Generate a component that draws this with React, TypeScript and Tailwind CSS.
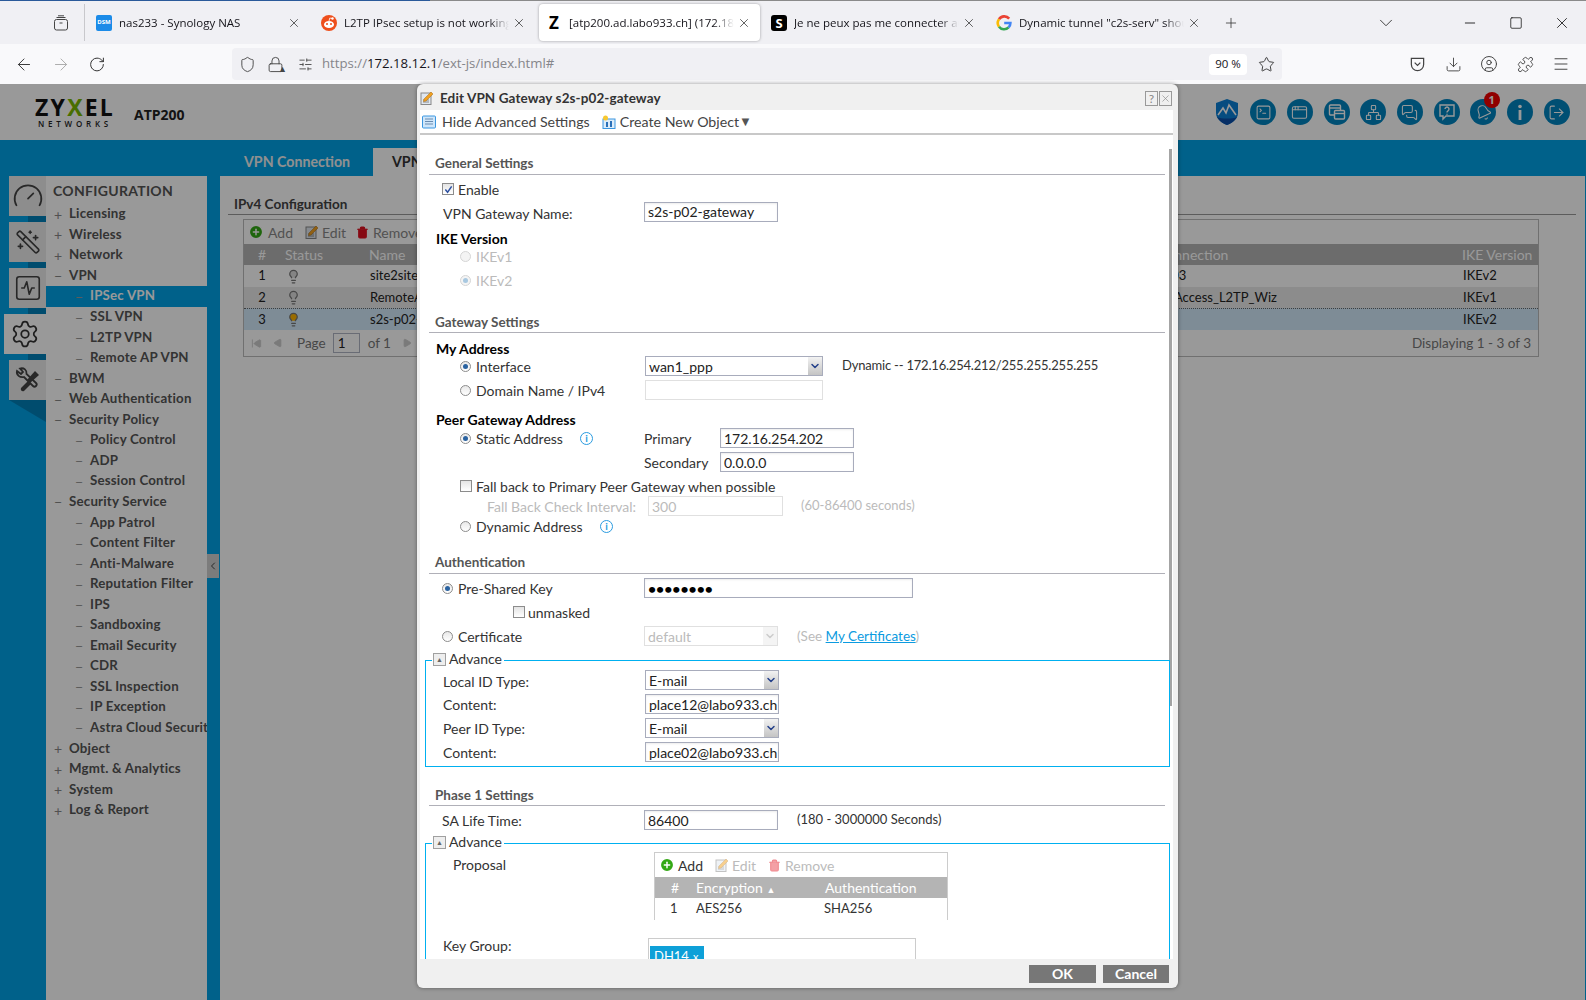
import React from "react";
import {
  AppWindow,
  ArrowLeft,
  ArrowRight,
  Bell,
  ChevronDown,
  ChevronLeft,
  CirclePlus,
  Download,
  Gauge,
  Lightbulb,
  LogOut,
  Menu,
  MessagesSquare,
  Minus,
  Network,
  Plus,
  Puzzle,
  RotateCw,
  Settings,
  Shield,
  SlidersHorizontal,
  SquareActivity,
  SquareTerminal,
  Square,
  Star,
  Trash2,
  UserCircle,
  WandSparkles,
  X,
  Lock,
  SkipBack,
  Play,
} from "lucide-react";

const tabs = [
  { title: "nas233 - Synology NAS", icon: "dsm" },
  { title: "L2TP IPsec setup is not working", icon: "reddit" },
  { title: "[atp200.ad.labo933.ch] (172.18.12.1)", icon: "z", active: true },
  { title: "Je ne peux pas me connecter au VPN", icon: "s" },
  { title: 'Dynamic tunnel "c2s-serv" should', icon: "g" },
];

const menu = [
  { label: "Licensing", sign: "+", level: 1 },
  { label: "Wireless", sign: "+", level: 1 },
  { label: "Network", sign: "+", level: 1 },
  { label: "VPN", sign: "−", level: 1 },
  { label: "IPSec VPN", sign: "−", level: 2, active: true },
  { label: "SSL VPN", sign: "−", level: 2 },
  { label: "L2TP VPN", sign: "−", level: 2 },
  { label: "Remote AP VPN", sign: "−", level: 2 },
  { label: "BWM", sign: "−", level: 1 },
  { label: "Web Authentication", sign: "−", level: 1 },
  { label: "Security Policy", sign: "−", level: 1 },
  { label: "Policy Control", sign: "−", level: 2 },
  { label: "ADP", sign: "−", level: 2 },
  { label: "Session Control", sign: "−", level: 2 },
  { label: "Security Service", sign: "−", level: 1 },
  { label: "App Patrol", sign: "−", level: 2 },
  { label: "Content Filter", sign: "−", level: 2 },
  { label: "Anti-Malware", sign: "−", level: 2 },
  { label: "Reputation Filter", sign: "−", level: 2 },
  { label: "IPS", sign: "−", level: 2 },
  { label: "Sandboxing", sign: "−", level: 2 },
  { label: "Email Security", sign: "−", level: 2 },
  { label: "CDR", sign: "−", level: 2 },
  { label: "SSL Inspection", sign: "−", level: 2 },
  { label: "IP Exception", sign: "−", level: 2 },
  { label: "Astra Cloud Security", sign: "−", level: 2 },
  { label: "Object", sign: "+", level: 1 },
  { label: "Mgmt. & Analytics", sign: "+", level: 1 },
  { label: "System", sign: "+", level: 1 },
  { label: "Log & Report", sign: "+", level: 1 },
];

const Windows = () => (
  <svg viewBox="0 0 18 18" className="w-[18px] h-[18px] text-white" fill="none" stroke="currentColor" strokeWidth="1.4">
    <rect x="1.5" y="2" width="11" height="10" rx="1" />
    <path d="M1.5 5h11" />
    <rect x="6.5" y="7.5" width="10" height="8.5" rx="1" fill="#0084c0" />
    <path d="M6.5 10.5h10" />
  </svg>
);

const HelpBubble = () => (
  <svg viewBox="0 0 18 18" className="w-[18px] h-[18px] text-white" fill="none" stroke="currentColor" strokeWidth="1.4">
    <path d="M2 2h14v11H8l-3 3v-3H2z" />
    <path d="M7 6 a2 2 0 1 1 3 1.8 C9.2 8.3 9 8.8 9 9.6" />
    <path d="M9 10.8v1" />
  </svg>
);

const InfoBar = () => (
  <svg viewBox="0 0 18 18" className="w-[18px] h-[18px] text-white" fill="currentColor">
    <circle cx="9" cy="3.5" r="1.8" />
    <rect x="7.6" y="7" width="2.8" height="10" />
  </svg>
);

const headerIcons = [
  <SquareTerminal key="a" size={17} strokeWidth={1.5} className="text-white" />,
  <AppWindow key="b" size={17} strokeWidth={1.5} className="text-white" />,
  <Windows key="c" />,
  <Network key="d" size={17} strokeWidth={1.5} className="text-white" />,
  <MessagesSquare key="e" size={17} strokeWidth={1.5} className="text-white" />,
  <HelpBubble key="f" />,
  <Bell key="g" size={17} strokeWidth={1.5} className="text-white -rotate-[25deg]" />,
  <InfoBar key="h" />,
  <LogOut key="i" size={17} strokeWidth={1.5} className="text-white" />,
];

const Favicon = ({ kind }: { kind: string }) => {
  if (kind === "dsm")
    return (
      <div className="w-4 h-4 rounded-[2px] bg-[#1b8be8] text-white text-[6px] font-bold flex items-center justify-center">
        DSM
      </div>
    );
  if (kind === "reddit")
    return (
      <svg viewBox="0 0 16 16" className="w-4 h-4">
        <circle cx="8" cy="8" r="8" fill="#ee4f1c" />
        <ellipse cx="8" cy="9.5" rx="5" ry="3.6" fill="white" />
        <circle cx="6" cy="9" r="1" fill="#ee4f1c" />
        <circle cx="10" cy="9" r="1" fill="#ee4f1c" />
        <circle cx="11.5" cy="3.5" r="1.2" fill="white" />
        <path d="M8 6 L8.8 3 L11 3.5" stroke="white" strokeWidth="0.8" fill="none" />
      </svg>
    );
  if (kind === "z")
    return <div className="w-4 h-4 text-[17px] leading-4 font-bold text-center text-black">Z</div>;
  if (kind === "s")
    return (
      <div className="w-4 h-4 rounded-[3px] bg-black text-white text-[13px] leading-4 font-bold text-center">
        S
      </div>
    );
  return (
    <svg viewBox="0 0 16 16" className="w-4 h-4" fill="none" strokeWidth="2.6">
      <path d="M13.2 3.6 A6.4 6.4 0 0 0 3 4.3" stroke="#ea4335" />
      <path d="M3 4.3 A6.4 6.4 0 0 0 3 11.7" stroke="#fbbc05" />
      <path d="M3 11.7 A6.4 6.4 0 0 0 12.6 12.4" stroke="#34a853" />
      <path d="M12.6 12.4 A6.4 6.4 0 0 0 14.4 8 H8.2" stroke="#4285f4" />
    </svg>
  );
};

const TabBar = () => (
  <div className="h-11 bg-[#f0f0f4] flex flex-col">
    <div className="h-px bg-[linear-gradient(to_right,#2a5a9a_430px,#8a8a8a_430px)]" />
    <div className="flex-1 flex items-center">
      <svg viewBox="0 0 16 16" className="ml-[53px] w-4 h-4 text-[#444]" fill="none" stroke="currentColor">
        <rect x="1.5" y="4.5" width="13" height="10.5" rx="2" />
        <path d="M3.5 2.5h9M5 0.8h6M6.5 8h3" />
      </svg>
      <div className="ml-[15px] mr-1 w-px h-[37px] bg-[#c8c8cc]" />
      {tabs.map((tab) => (
        <div
          key={tab.icon}
          className={
            tab.active
              ? "w-[221px] mr-1 h-[37px] flex items-center pl-[7px] bg-white rounded shadow-[0_0_3px_rgba(0,0,0,0.35)]"
              : "w-[221px] mr-1 h-[37px] flex items-center pl-[7px]"
          }
        >
          <div className="shrink-0">
            <Favicon kind={tab.icon} />
          </div>
          <div className="ml-[7px] w-[165px] overflow-hidden whitespace-nowrap text-[11.5px] text-[#15141a] [mask-image:linear-gradient(to_right,black_88%,transparent)]">
            {tab.title}
          </div>
          <X size={14} strokeWidth={1.2} className="ml-[3px] text-[#222]" />
        </div>
      ))}
      <div className="w-[34px] flex justify-center">
        <Plus size={16} strokeWidth={1.2} className="text-[#333]" />
      </div>
      <div className="ml-auto flex items-center pr-3">
        <ChevronDown size={22} strokeWidth={1} className="w-6 text-[#333]" />
        <Minus size={16} strokeWidth={1.3} className="ml-[60px] w-6 text-[#111]" />
        <Square size={14} strokeWidth={1.3} className="ml-[22px] w-6 text-[#111]" />
        <X size={18} strokeWidth={1.1} className="ml-[22px] w-6 text-[#111]" />
      </div>
    </div>
  </div>
);

const ToolBar = () => (
  <div className="h-10 bg-[#f9f9fb] flex items-center pl-3 pr-[7px]">
    <ArrowLeft size={19} strokeWidth={1.2} className="w-6 text-[#333]" />
    <ArrowRight size={19} strokeWidth={1.2} className="ml-[13px] w-6 text-[#aaa]" />
    <RotateCw size={17} strokeWidth={1.4} className="ml-3 w-6 text-[#333]" />
    <div className="ml-[123px] w-[1050px] h-8 bg-[#f0f0f4] rounded flex items-center pl-[7px]">
      <Shield size={17} strokeWidth={1.3} className="text-[#444]" />
      <div className="relative ml-[11px]">
        <Lock size={17} strokeWidth={1.3} className="text-[#444]" />
        <div className="absolute right-[-3px] bottom-0 text-[9px] leading-[9px] font-bold text-[#444]">▲</div>
      </div>
      <SlidersHorizontal size={15} strokeWidth={1.4} className="ml-[14px] text-[#444]" />
      <div className="ml-[9px] text-[13.2px] text-[#85858a] whitespace-nowrap">
        https://<span className="text-[#15141a]">172.18.12.1</span>/ext-js/index.html#
      </div>
      <div className="ml-auto w-[38px] h-[21px] bg-white rounded text-[11.5px] flex items-center justify-center text-[#15141a]">
        90 %
      </div>
      <Star size={17} strokeWidth={1.3} className="ml-[11px] mr-[7px] text-[#333]" />
    </div>
    <div className="ml-auto flex items-center">
      <div className="w-9 flex justify-center">
        <svg viewBox="0 0 18 18" className="w-[17px] h-[17px] text-[#444]" fill="none" stroke="currentColor" strokeWidth="1.3">
          <path d="M2.5 2.5h13v6.5a6.5 6.5 0 0 1-13 0z" />
          <path d="M6 7l3 3 3-3" />
        </svg>
      </div>
      <div className="w-9 flex justify-center">
        <Download size={17} strokeWidth={1.3} className="text-[#444]" />
      </div>
      <div className="w-9 flex justify-center">
        <UserCircle size={18} strokeWidth={1.3} className="text-[#444]" />
      </div>
      <div className="w-9 flex justify-center">
        <Puzzle size={17} strokeWidth={1.3} className="text-[#444]" />
      </div>
      <div className="w-9 flex justify-center">
        <Menu size={18} strokeWidth={1.3} className="text-[#444]" />
      </div>
    </div>
  </div>
);

const AppHeader = () => (
  <div className="h-14 bg-white flex items-center shrink-0">
    <div className="ml-9 w-[78px] flex flex-col items-center">
      <div className="text-[23px] leading-[23px] font-bold text-[#111] tracking-[2.2px]">
        ZY<span className="text-[#7ab800]">X</span>EL
      </div>
      <div className="text-[8px] leading-[10px] font-semibold text-[#222] tracking-[3.8px]">NETWORKS</div>
    </div>
    <div className="ml-5 text-[14px] font-bold text-[#222] mt-[4px]">ATP200</div>
    <div className="ml-auto flex items-center pr-[11px]">
      <svg viewBox="0 0 24 28" className="w-6 h-7 mr-[6px]">
        <path d="M12 1 L23 5 V15 C23 21 17 25 12 27 C7 25 1 21 1 15 V5 Z" fill="#0b7fd6" />
        <path d="M2 19 C6 21 18 21 22 19 C19 24 15 26 12 27 C9 26 5 24 2 19 Z" fill="#0a4ea8" />
        <path d="M3 17 L8 10 L11 15 L14 7 L21 17" fill="none" stroke="white" strokeWidth="1.6" />
      </svg>
      {headerIcons.map((icon, i) => (
        <div key={i} className="relative w-[36.7px] flex justify-center">
          <div className="w-[26px] h-[26px] rounded-full bg-[#0084c0] flex items-center justify-center">{icon}</div>
          {i === 6 && (
            <div className="absolute -top-[7px] right-[2px] w-4 h-4 rounded-full bg-[#f00000] text-white text-[11px] font-bold flex items-center justify-center">
              1
            </div>
          )}
        </div>
      ))}
    </div>
  </div>
);

const SideTiles = () => (
  <div className="w-[46px] shrink-0 flex flex-col items-end">
    <div className="w-[37px] h-10 bg-[#ececec] flex items-center justify-center">
      <Gauge size={32} strokeWidth={1.3} className="text-[#444]" />
    </div>
    <div className="w-[18px] h-1.5 bg-[#007fb8]" />
    <div className="w-[37px] h-10 bg-[#ececec] flex items-center justify-center">
      <WandSparkles size={26} strokeWidth={1.5} className="text-[#444] -scale-x-100" />
    </div>
    <div className="w-[18px] h-1.5 bg-[#007fb8]" />
    <div className="w-[37px] h-10 bg-[#ececec] flex items-center justify-center">
      <SquareActivity size={30} strokeWidth={1.3} className="text-[#444]" />
    </div>
    <div className="w-[18px] h-1.5 bg-[#007fb8]" />
    <div className="w-[42px] h-10 bg-white flex items-center justify-center">
      <Settings size={30} strokeWidth={1.4} className="text-[#333]" />
    </div>
    <div className="w-[18px] h-1.5 bg-[#007fb8]" />
    <div className="w-[37px] h-10 bg-[#ececec] flex items-center justify-center">
      <svg viewBox="0 0 28 28" className="w-7 h-7 text-[#444]" fill="none" stroke="currentColor" strokeWidth="1.8">
        <path d="M3 5 L7 8 L9 6 L6 2.5 C10 1.5 13 4 12.5 8 L22 17 C24 19 21 22 19 20 L10 11 C6 12 2 9 3 5 Z" />
        <path d="M21 5 L25 9 L16 17 L13 14 Z" fill="currentColor" stroke="none" />
        <path d="M14 15 L7 22 C6 24 8 26 10 25 L17 18 Z" fill="currentColor" stroke="none" />
      </svg>
    </div>
    <div className="w-[37px] h-[22px] bg-[#007fb8] [clip-path:polygon(0_0,100%_0,100%_100%)]" />
  </div>
);

const SideMenu = () => (
  <div className="w-[161px] shrink-0 bg-white overflow-hidden font-['Lato',sans-serif]">
    <div className="h-7 pl-[7px] flex items-center text-[14px] font-bold text-[#555] tracking-[0.3px]">
      CONFIGURATION
    </div>
    {menu.map((item) => (
      <div
        key={item.label}
        className={
          item.active
            ? "h-[20.55px] flex items-center bg-[#00a2e6] text-white whitespace-nowrap"
            : "h-[20.55px] flex items-center whitespace-nowrap text-[#555]"
        }
      >
        <div
          className={
            item.level === 1
              ? "shrink-0 w-[23px] pl-[8px] text-[14px] font-normal text-[#888]"
              : "shrink-0 w-[44px] pl-[29px] text-[14px] font-normal text-[#999]"
          }
        >
          {item.sign}
        </div>
        <div className="text-[13.3px] font-bold tracking-[0.2px]">{item.label}</div>
      </div>
    ))}
  </div>
);

const gridCols = "grid grid-cols-[36px_83px_750px_348px_1fr] items-center";

const GatewayGrid = () => (
  <div className="ml-[15px] mt-[4px] w-[1296px] h-[138px] border border-[#bbb] text-[13px] text-[#222] font-['Lato',sans-serif]">
    <div className="h-6 flex items-center text-[#888] text-[14px]">
      <CirclePlus size={16} strokeWidth={2.2} className="ml-[4px] text-white fill-[#33a814]" />
      <span className="ml-[4px]">Add</span>
      <DocEdit className="ml-[12px]" />
      <span className="ml-[3px]">Edit</span>
      <Trash2 size={13} className="ml-[10px] text-[#e01020] fill-[#e01020]" />
      <span className="ml-[4px]">Remove</span>
    </div>
    <div className={gridCols + " h-[21px] bg-[#b4b4b4] text-white text-[14px]"}>
      <div className="text-center">#</div>
      <div className="pl-[5px]">Status</div>
      <div className="pl-[6px]">Name</div>
      <div className="pl-[12px]">VPN Connection</div>
      <div className="pl-[1px]">IKE Version</div>
    </div>
    <div className={gridCols + " h-[22px]"}>
      <div className="text-center">1</div>
      <Lightbulb size={15} className="ml-[6px] text-[#777] fill-[#ddd]" />
      <div className="pl-[7px]">site2site-p03</div>
      <div className="-ml-[2px]">site2site-p03</div>
      <div className="pl-[2px]">IKEv2</div>
    </div>
    <div className={gridCols + " h-[21px] bg-[#eaeaea]"}>
      <div className="text-center">2</div>
      <Lightbulb size={15} className="ml-[6px] text-[#777] fill-[#ddd]" />
      <div className="pl-[7px]">RemoteAccess</div>
      <div className="pl-[11px]">Remote_Access_L2TP_Wiz</div>
      <div className="pl-[2px]">IKEv1</div>
    </div>
    <div className={gridCols + " h-[22px] bg-[#d2e9fa] border-t border-dotted border-[#666]"}>
      <div className="text-center">3</div>
      <Lightbulb size={15} className="ml-[6px] text-[#777] fill-[#ffb400]" />
      <div className="pl-[7px]">s2s-p02-gateway</div>
      <div />
      <div className="pl-[2px]">IKEv2</div>
    </div>
    <div className="h-[26px] flex items-center text-[13.5px] text-[#777]">
      <SkipBack size={11} className="ml-[7px] text-[#ccc] fill-[#ccc]" />
      <Play size={10} className="ml-[11px] rotate-180 text-[#ccc] fill-[#ccc]" />
      <span className="ml-[14px]">Page</span>
      <div className="ml-[7px] w-[27px] h-[20px] border border-[#b0b4c4] bg-white text-[#222] pl-1 leading-[18px]">1</div>
      <span className="ml-[8px]">of 1</span>
      <Play size={10} className="ml-[11px] text-[#ccc] fill-[#ccc]" />
      <span className="ml-auto mr-[7px]">Displaying 1 - 3 of 3</span>
    </div>
  </div>
);

const DocEdit = ({ faded, className }: { faded?: boolean; className?: string }) => (
  <svg viewBox="0 0 14 14" className={(faded ? "w-[14px] h-[14px] opacity-50 " : "w-[14px] h-[14px] ") + (className ?? "")}>
    <rect x="1" y="2" width="10" height="11.5" fill="#dfe6ee" stroke="#888" />
    <path d="M3 9h6M3 11h6" stroke="#888" />
    <path d="M4 8 L11 1 L13 3 L6 10 L3.5 10.5 Z" fill="#f0a020" stroke="#a86a10" strokeWidth="0.5" />
  </svg>
);

const Page = () => (
  <div className="relative flex-1 flex flex-col overflow-hidden">
    <AppHeader />
    <div className="flex-1 bg-[#00a2e6] flex flex-col">
      <div className="h-9 flex items-end">
        <div className="ml-[244px] w-[129px] h-7 flex items-center text-[14.2px] font-bold text-[#f0f0f0] font-['Lato',sans-serif]">
          VPN Connection
        </div>
        <div className="w-[120px] h-7 pl-[19px] bg-white flex items-center text-[14.2px] font-bold text-[#333] font-['Lato',sans-serif]">
          VPN Gateway
        </div>
      </div>
      <div className="relative flex-1 flex">
        <SideTiles />
        <SideMenu />
        <div className="absolute left-[207px] top-[378px] w-3 h-6 bg-[#cfcfcf] flex items-center justify-center">
          <ChevronLeft size={14} className="text-[#444]" />
        </div>
        <div className="ml-[13px] mr-px flex-1 bg-white pl-2 pr-[9px]">
          <div className="mt-[17px] h-[22px] pt-[2px] border-b border-[#999] pl-[6px] flex items-center text-[13.5px] font-bold text-[#444] font-['Lato',sans-serif]">
            IPv4 Configuration
          </div>
          <GatewayGrid />
        </div>
      </div>
    </div>
    <div className="absolute inset-0 bg-black/40" />
  </div>
);

const SectionTitle = ({ title, className }: { title: string; className: string }) => (
  <div className={"ml-[9px] mr-2 h-[23px] pl-[6px] border-b border-[#b0b0b8] flex items-center text-[13.5px] font-bold text-[#555] " + className}>
    {title}
  </div>
);

const Radio = ({ on, disabled }: { on?: boolean; disabled?: boolean }) => (
  <div
    className={
      disabled
        ? "shrink-0 w-[11px] h-[11px] rounded-full border border-[#d5d5d5] bg-[#f4f4f4] flex items-center justify-center"
        : "shrink-0 w-[11px] h-[11px] rounded-full border border-[#8c8c8c] bg-gradient-to-b from-[#e8e8e8] to-white flex items-center justify-center"
    }
  >
    {on && <div className={disabled ? "w-[5px] h-[5px] rounded-full bg-[#a8c8e0]" : "w-[5px] h-[5px] rounded-full bg-[#2a62a0]"} />}
  </div>
);

const Check = ({ on }: { on?: boolean }) => (
  <div className="shrink-0 w-3 h-3 border border-[#8c8c8c] bg-gradient-to-b from-[#e4e4e4] to-white flex items-center justify-center">
    {on && (
      <svg viewBox="0 0 10 10" className="w-[9px] h-[9px]">
        <path d="M1.5 5 L4 8 L8.5 1.5" fill="none" stroke="#2b4fa0" strokeWidth="1.6" />
      </svg>
    )}
  </div>
);

const Field = ({ value, className, disabled }: { value?: string; className: string; disabled?: boolean }) => (
  <div
    className={
      (disabled
        ? "border border-[#e0e0e0] text-[#bbb] "
        : "border border-[#a8acbc] text-[#222] shadow-[inset_0_1px_2px_rgba(0,0,0,0.08)] ") +
      "h-5 pl-[3px] flex items-center bg-white whitespace-nowrap overflow-hidden " +
      className
    }
  >
    {value}
  </div>
);

const SelectBox = ({ value, className, disabled }: { value: string; className: string; disabled?: boolean }) => (
  <div
    className={
      (disabled ? "border border-[#e0e0e0] text-[#bbb] " : "border border-[#a8acbc] text-[#222] ") +
      "h-5 pl-[3px] flex items-center bg-white " +
      className
    }
  >
    <span className="flex-1">{value}</span>
    <div
      className={
        disabled
          ? "w-[14px] h-full bg-[#f4f4f4] flex items-center justify-center"
          : "w-[14px] h-full bg-gradient-to-b from-[#f2f2f2] to-[#c4c4c4] flex items-center justify-center"
      }
    >
      <ChevronDown size={12} strokeWidth={3} className={disabled ? "text-[#ccc]" : "text-[#24408a]"} />
    </div>
  </div>
);

const InfoDot = ({ className }: { className: string }) => (
  <div className={"w-[13px] h-[13px] rounded-full border border-[#2a9be0] text-[#2a9be0] text-[10px] leading-[11px] font-bold text-center " + className}>
    i
  </div>
);

const Legend = () => (
  <div className="absolute -top-[9px] left-[6px] pr-[2px] pl-px bg-white flex items-center h-[14px]">
    <div className="w-[13px] h-[13px] border border-[#a0a0a0] bg-[#eee] flex items-center justify-center text-[7px] leading-none text-[#666]">
      ▲
    </div>
    <span className="ml-[3px] -mt-[2px] text-[14px] text-[#333]">Advance</span>
  </div>
);

const GatewayForm = () => (
  <div className="relative flex-1 bg-white overflow-hidden text-[14px] text-[#333]">
    <div className="absolute left-[749px] top-[14px] w-[3px] h-[557px] bg-[#a4a4a4]" />

    <SectionTitle title="General Settings" className="mt-[17px] pt-[1px]" />
    <div className="mt-[2px] h-6 pl-[22px] flex items-center">
      <Check on />
      <span className="ml-[4px]">Enable</span>
    </div>
    <div className="mt-px h-[19px] pl-[23px] flex items-center">
      <span className="w-[201px] pt-[3px]">VPN Gateway Name:</span>
      <Field value="s2s-p02-gateway" className="w-[134px]" />
    </div>
    <div className="mt-[8px] h-[18px] pl-4 flex items-center font-bold text-black">IKE Version</div>
    <div className="h-[18px] pl-10 flex items-center text-[#bbb]">
      <Radio disabled />
      <span className="ml-[5px]">IKEv1</span>
    </div>
    <div className="mt-[6px] h-[18px] pl-10 flex items-center text-[#bbb]">
      <Radio on disabled />
      <span className="ml-[5px]">IKEv2</span>
    </div>

    <SectionTitle title="Gateway Settings" className="mt-[21px] pt-[2px]" />
    <div className="mt-[7px] h-4 pl-4 flex items-center font-bold text-black">My Address</div>
    <div className="h-5 pl-10 flex items-center">
      <Radio on />
      <span className="ml-[5px] w-[169px]">Interface</span>
      <SelectBox value="wan1_ppp" className="w-[178px]" />
      <span className="ml-[19px] text-[13px] tracking-[-0.2px]">Dynamic -- 172.16.254.212/255.255.255.255</span>
    </div>
    <div className="mt-1 h-5 pl-10 flex items-center">
      <Radio />
      <span className="ml-[5px] w-[169px]">Domain Name / IPv4</span>
      <Field className="w-[178px]" disabled />
    </div>
    <div className="mt-[10px] h-[18px] pl-4 flex items-center font-bold text-black">Peer Gateway Address</div>
    <div className="h-5 pl-10 flex items-center">
      <Radio on />
      <span className="ml-[5px] w-[104px]">Static Address</span>
      <InfoDot className="mr-[51px]" />
      <span className="w-[76px]">Primary</span>
      <Field value="172.16.254.202" className="w-[134px]" />
    </div>
    <div className="mt-1 h-5 pl-[224px] flex items-center">
      <span className="w-[76px]">Secondary</span>
      <Field value="0.0.0.0" className="w-[134px]" />
    </div>
    <div className="mt-1 h-5 pl-10 flex items-center">
      <Check />
      <span className="ml-[4px]">Fall back to Primary Peer Gateway when possible</span>
    </div>
    <div className="h-5 pl-[67px] flex items-center text-[#bbb]">
      <span className="w-[161px]">Fall Back Check Interval:</span>
      <Field value="300" className="w-[135px]" disabled />
      <span className="ml-[18px] text-[13px]">(60-86400 seconds)</span>
    </div>
    <div className="h-5 pl-10 flex items-center">
      <Radio />
      <span className="ml-[5px] w-[124px]">Dynamic Address</span>
      <InfoDot className="" />
    </div>

    <SectionTitle title="Authentication" className="mt-[15px] pt-[1px]" />
    <div className="mt-1 h-5 pl-[22px] flex items-center">
      <Radio on />
      <span className="ml-[5px] w-[186px]">Pre-Shared Key</span>
      <Field value="••••••••" className="w-[269px] text-black text-[14px] font-bold" />
    </div>
    <div className="mt-1 h-5 pl-[93px] flex items-center">
      <Check />
      <span className="ml-[3px]">unmasked</span>
    </div>
    <div className="mt-1 h-5 pl-[22px] flex items-center">
      <Radio />
      <span className="ml-[5px] w-[186px]">Certificate</span>
      <SelectBox value="default" className="w-[134px]" disabled />
      <span className="ml-[19px] text-[13.5px] text-[#bbb]">
        (See <span className="text-[#0c9be0] underline">My Certificates</span>)
      </span>
    </div>

    <div className="relative mt-[14px] ml-[5px] w-[745px] h-[107px] border border-[#00b0f0] pt-[9px] pl-[17px]">
      <Legend />
      <div className="h-5 flex items-center">
        <span className="w-[202px] pt-[3px]">Local ID Type:</span>
        <SelectBox value="E-mail" className="w-[134px]" />
      </div>
      <div className="mt-1 h-5 flex items-center">
        <span className="w-[202px]">Content:</span>
        <Field value="place12@labo933.ch" className="w-[134px]" />
      </div>
      <div className="mt-1 h-5 flex items-center">
        <span className="w-[202px]">Peer ID Type:</span>
        <SelectBox value="E-mail" className="w-[134px]" />
      </div>
      <div className="mt-1 h-5 flex items-center">
        <span className="w-[202px]">Content:</span>
        <Field value="place02@labo933.ch" className="w-[134px]" />
      </div>
    </div>

    <SectionTitle title="Phase 1 Settings" className="mt-4 pt-[2px]" />
    <div className="mt-[4px] h-5 pl-[22px] flex items-center">
      <span className="w-[202px]">SA Life Time:</span>
      <Field value="86400" className="w-[134px]" />
      <span className="ml-[19px] text-[13px]">(180 - 3000000 Seconds)</span>
    </div>

    <div className="relative mt-[13px] ml-[5px] w-[745px] h-[200px] border border-[#00b0f0] pt-2">
      <Legend />
      <div className="flex">
        <span className="ml-[27px] w-[201px] pt-[2px]">Proposal</span>
        <div className="w-[294px] h-[68px] border-x border-t border-[#ccc] text-[13px]">
          <div className="h-6 flex items-center text-[14px]">
            <CirclePlus size={16} strokeWidth={2.2} className="ml-[4px] text-white fill-[#33a814]" />
            <span className="ml-[3px]">Add</span>
            <DocEdit faded className="ml-[12px]" />
            <span className="ml-[3px] text-[#bbb]">Edit</span>
            <Trash2 size={13} className="ml-[12px] text-[#f08a90] fill-[#f4a0a5]" />
            <span className="ml-[4px] text-[#bbb]">Remove</span>
          </div>
          <div className="h-[21px] bg-[#b4b4b4] text-white flex items-center text-[14px]">
            <span className="w-[41px] pl-[16px]">#</span>
            <span className="w-[129px]">
              Encryption <span className="text-[9px] align-middle">▲</span>
            </span>
            <span>Authentication</span>
          </div>
          <div className="h-[22px] flex items-center">
            <span className="w-[41px] pl-[15px]">1</span>
            <span className="w-[128px]">AES256</span>
            <span>SHA256</span>
          </div>
        </div>
      </div>
      <div className="mt-[18px] flex items-start">
        <span className="ml-[17px] w-[205px] -mt-[3px]">Key Group:</span>
        <div className="w-[268px] h-[60px] border border-[#ccc] pt-[7px] pl-px">
          <div className="w-[54px] h-5 bg-[#0ea0d8] text-white text-[13px] pl-1 pt-[2px] flex items-center">
            DH14 <span className="ml-1 text-[11px]">x</span>
          </div>
        </div>
      </div>
    </div>
  </div>
);

const GatewayDialog = () => (
  <div className="absolute left-[417px] top-[84px] w-[761px] h-[904px] flex flex-col bg-[#f0f0f0] rounded-md shadow-[0_0_4px_rgba(0,0,0,0.4)] overflow-hidden font-['Lato',sans-serif]">
    <div className="h-[26px] shrink-0 flex items-center pl-[3px] pr-[6px] pt-[2px]">
      <DocEdit />
      <span className="ml-[6px] text-[13.5px] font-bold text-[#333] tracking-[0.1px]">Edit VPN Gateway s2s-p02-gateway</span>
      <div className="ml-auto w-[13px] h-[15px] border border-[#999] text-[#888] text-[12px] leading-[13px] text-center">?</div>
      <div className="ml-px w-[13px] h-[15px] border border-[#999] text-[#888] flex items-center justify-center">
        <X size={11} strokeWidth={1.4} />
      </div>
    </div>
    <div className="ml-[3px] mr-[5px] h-[25px] shrink-0 bg-white border-b-2 border-[#c8c8c8] flex items-center text-[14.2px] text-[#444] pl-[2px]">
      <svg viewBox="0 0 14 14" className="w-[14px] h-[14px]">
        <rect x="0.5" y="1" width="13" height="12" rx="1" fill="#cfe6fa" stroke="#3a96e0" />
        <path d="M3 4h8M3 6.5h8M3 9h8" stroke="#6a8cb0" />
      </svg>
      <span className="ml-[6px]">Hide Advanced Settings</span>
      <svg viewBox="0 0 14 14" className="ml-[12px] w-[14px] h-[14px]">
        <rect x="1" y="4" width="12" height="9.5" fill="#dcecfa" stroke="#3a96e0" />
        <circle cx="3.5" cy="3" r="2.5" fill="#f8c830" />
        <rect x="4" y="7" width="2" height="5" fill="#2a70b8" />
        <rect x="8" y="6" width="2" height="6" fill="#2a70b8" />
      </svg>
      <span className="ml-[4px]">Create New Object</span>
      <span className="text-[13px] leading-none text-[#555]">▼</span>
    </div>
    <div className="ml-[3px] mr-[5px] flex-1 flex flex-col min-h-0">
      <GatewayForm />
    </div>
    <div className="h-[29px] shrink-0 flex items-center justify-end pr-[9px] gap-[7px] text-white text-[14px] font-bold">
      <div className="w-[67px] h-[18px] bg-[#777] flex items-center justify-center">OK</div>
      <div className="w-[66px] h-[18px] bg-[#777] flex items-center justify-center">Cancel</div>
    </div>
  </div>
);

export default function App() {
  return (
    <div className="relative w-full h-screen flex flex-col overflow-hidden font-['Open_Sans',sans-serif]">
      <TabBar />
      <ToolBar />
      <Page />
      <GatewayDialog />
    </div>
  );
}
